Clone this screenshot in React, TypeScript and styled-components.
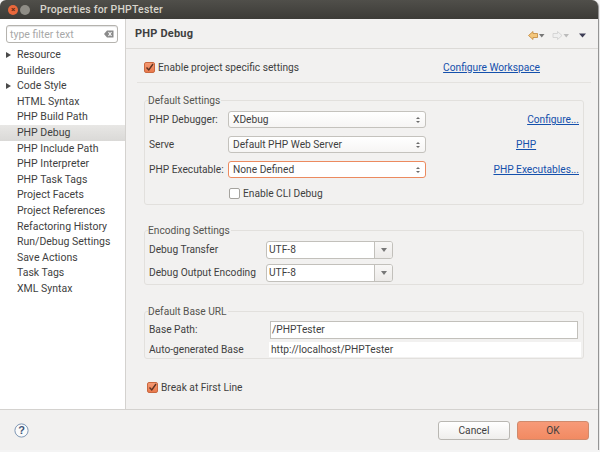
import React from 'react'
import styled, { createGlobalStyle } from 'styled-components'

const GlobalStyle = createGlobalStyle`
    html, body { margin: 0; padding: 0; background: #f4f4f4; }
    body { font-family: Roboto, "Open Sans", sans-serif; font-size: 10.2px; color: #3f3f3f; }
`

const Window = styled.div`
    width: 598px;
    height: 450px;
    display: flex;
    flex-direction: column;
    background: #f2f1f0;
    border-radius: 6px 6px 0 0;
    overflow: hidden;
    box-shadow: 1px 1px 1px #8a8a8a;
`

const TitleBar = styled.div`
    height: 19px;
    flex: none;
    display: flex;
    align-items: center;
    padding-left: 8px;
    background: linear-gradient(#504f4a, #3c3b37);
`

const WindowButton = styled.span<{ $close?: boolean }>`
    width: 10px;
    height: 10px;
    margin-right: 2px;
    border-radius: 50%;
    display: flex;
    align-items: center;
    justify-content: center;
    font-size: 8px;
    line-height: 1;
    font-weight: 700;
    color: ${ p => p.$close ? '#5d2a14' : '#3c3b37' };
    background: ${ p => p.$close ? '#e9683c' : '#8f8d86' };
`

const Title = styled.span`
    margin-left: 8px;
    font-size: 10.5px;
    font-weight: 500;
    letter-spacing: 0.2px;
    color: #d8d5cc;
`

const Body = styled.div`
    flex: 1;
    display: flex;
    min-height: 0;
`

const Sidebar = styled.div`
    width: 125px;
    flex: none;
    background: #fff;
    border-right: 1px solid #d4d2cf;
    padding-top: 6px;
    box-sizing: content-box;
    font-size: 10.5px;
`

const Filter = styled.div`
    margin: 0 7px 0 6px;
    height: 16px;
    display: flex;
    align-items: center;
    justify-content: space-between;
    padding: 0 3px;
    border: 1px solid #b5b3ae;
    border-radius: 3px;
    color: #a8a8a8;
    box-shadow: inset 0 1px 1px #e4e4e4;
`

const Tree = styled.div`
    margin-top: 4px;
`

const TreeRow = styled.div<{ $selected?: boolean }>`
    height: 15.6px;
    line-height: 15.6px;
    display: flex;
    align-items: center;
    padding-left: 6px;
    white-space: nowrap;
    background: ${ p => p.$selected ? 'linear-gradient(#e8e7e5, #dad9d7)' : 'transparent' };
`

const Arrow = styled.span<{ $show?: boolean }>`
    width: 11px;
    flex: none;
    &::before {
        content: '';
        display: ${ p => p.$show ? 'block' : 'none' };
        width: 0;
        height: 0;
        border-left: 5px solid #4a4a4a;
        border-top: 3.5px solid transparent;
        border-bottom: 3.5px solid transparent;
    }
`

const Main = styled.div`
    flex: 1;
    min-width: 0;
    display: flex;
    flex-direction: column;
`

const PageHeader = styled.div`
    height: 29px;
    flex: none;
    display: flex;
    align-items: center;
    justify-content: space-between;
    padding: 0 12px 0 9px;
    border-bottom: 1px solid #dcdad7;
`

const PageTitle = styled.span`
    font-size: 11px;
    font-weight: 700;
    letter-spacing: 0.2px;
`

const NavIcons = styled.div`
    display: flex;
    align-items: center;
    gap: 7px;
    padding-top: 3px;
`

const MenuSlot = styled.span`
    display: flex;
    margin-left: 3px;
`

const Content = styled.div`
    flex: 1;
    padding: 0 7px 0 11px;
`

const TopRow = styled.div`
    height: 34px;
    box-sizing: border-box;
    display: flex;
    align-items: center;
    justify-content: space-between;
    padding: 3px 51px 0 7px;
    border-bottom: 1px solid #e4e2df;
`

const CheckRow = styled.label<{ $indent?: number }>`
    display: flex;
    align-items: center;
    gap: 3px;
    margin-left: ${ p => p.$indent || 0 }px;
`

const Box = styled.span<{ $checked?: boolean }>`
    width: 11px;
    height: 11px;
    flex: none;
    box-sizing: border-box;
    border-radius: 2px;
    display: flex;
    border: 1px solid ${ p => p.$checked ? '#c9683f' : '#a5a39e' };
    background: ${ p => p.$checked ? 'linear-gradient(#f59a73, #e9794d)' : '#fff' };
`

const Link = styled.a`
    color: #1450ac;
    text-decoration: underline;
    white-space: nowrap;
`

const Group = styled.fieldset<{ $top: number; $height: number }>`
    margin: ${ p => p.$top }px 7px 0 7px;
    height: ${ p => p.$height }px;
    padding: 0 4px 0 4px;
    box-sizing: border-box;
    border: 1px solid #e2e0dd;
    border-radius: 3px;
    min-width: 0;
`

const Legend = styled.legend<{ $gap: number }>`
    padding: 0 1px 0 0;
    margin-left: -1px;
    line-height: 13px;
    margin-bottom: ${ p => p.$gap }px;
    color: #55544f;
`

const FieldRow = styled.div<{ $height: number }>`
    display: flex;
    align-items: center;
    height: ${ p => p.$height }px;
`

const FieldLabel = styled.span<{ $width: number }>`
    width: ${ p => p.$width }px;
    flex: none;
    white-space: nowrap;
`

const Select = styled.div<{ $focused?: boolean }>`
    width: 198px;
    height: 17px;
    flex: none;
    box-sizing: border-box;
    display: flex;
    align-items: center;
    justify-content: space-between;
    padding: 0 5px 0 4px;
    border: 1px solid ${ p => p.$focused ? '#ec8a5f' : '#c4c2bd' };
    border-radius: 3px;
    background: ${ p => p.$focused ? '#fff' : 'linear-gradient(#ffffff, #f6f5f4)' };
`

const Spinner = styled.span`
    display: flex;
    flex-direction: column;
    gap: 2px;
    &::before, &::after {
        content: '';
        width: 0;
        height: 0;
        border-left: 2px solid transparent;
        border-right: 2px solid transparent;
    }
    &::before { border-bottom: 2.5px solid #6a6a6a; }
    &::after { border-top: 2.5px solid #6a6a6a; }
`

const RightLink = styled.div`
    flex: 1;
    text-align: right;
`

const CenterLink = styled.div`
    flex: 1;
    padding-left: 90px;
`

const Combo = styled.div`
    width: 127px;
    height: 18px;
    flex: none;
    box-sizing: border-box;
    display: flex;
    border: 1px solid #c2c0bb;
    border-radius: 3px;
    background: #fff;
    overflow: hidden;
`

const ComboText = styled.span`
    flex: 1;
    line-height: 16px;
    padding-left: 2px;
`

const ComboButton = styled.span`
    width: 17px;
    flex: none;
    display: flex;
    align-items: center;
    justify-content: center;
    border-left: 1px solid #c2c0bb;
    background: linear-gradient(#f8f7f6, #eceae8);
    &::after {
        content: '';
        border-left: 3px solid transparent;
        border-right: 3px solid transparent;
        border-top: 4px solid #777;
    }
`

const TextInput = styled.div`
    width: 308px;
    height: 18px;
    flex: none;
    box-sizing: border-box;
    border: 1px solid #c2c0bb;
    background: #fff;
    line-height: 16px;
    padding-left: 1px;
`

const ReadOnly = styled.div`
    width: 310px;
    height: 15px;
    flex: none;
    margin-left: -1px;
    background: #fff;
    line-height: 15px;
    padding-left: 2px;
`

const BreakRow = styled.div`
    margin: 23px 0 0 10px;
`

const Footer = styled.div`
    height: 40px;
    flex: none;
    display: flex;
    align-items: center;
    justify-content: space-between;
    padding: 0 9px 0 14px;
    border-top: 1px solid #d4d2cf;
`

const Buttons = styled.div`
    display: flex;
    gap: 7px;
`

const Button = styled.button<{ $primary?: boolean }>`
    width: 72px;
    height: 19px;
    padding: 0;
    font: inherit;
    color: #3f3f3f;
    border-radius: 3px;
    border: 1px solid ${ p => p.$primary ? '#d08a6c' : '#b9b7b2' };
    background: ${ p => p.$primary ? 'linear-gradient(#f79a78, #f28a62)' : 'linear-gradient(#ffffff, #efeeec)' };
`

const Check = () => (
    <svg width="9" height="9" viewBox="0 0 9 9">
        <path d="M1.5 4.5 L3.8 7 L8 1" fill="none" stroke="#5b3323" strokeWidth="1.4" />
    </svg>
)

const ClearIcon = () => (
    <svg width="10" height="8" viewBox="0 0 10 8">
        <path d="M0 4 L3 0.5 H9.5 V7.5 H3 Z" fill="#8a8a8a" />
        <path d="M4.5 2 L7.5 6 M7.5 2 L4.5 6" stroke="#fff" strokeWidth="1.1" />
    </svg>
)

const BackIcon = () => (
    <svg width="17" height="9" viewBox="0 0 17 9">
        <path d="M0.5 4.5 L5 0.5 V2.5 H9.5 V6.5 H5 V8.5 Z" fill="#f4c77c" stroke="#c0863a" strokeWidth="0.8" />
        <path d="M11 3 H16.5 L13.75 6.5 Z" fill="#777" />
    </svg>
)

const ForwardIcon = () => (
    <svg width="17" height="9" viewBox="0 0 17 9">
        <path d="M10 4.5 L5.5 0.5 V2.5 H1 V6.5 H5.5 V8.5 Z" fill="#efefef" stroke="#cfcfcf" strokeWidth="0.8" />
        <path d="M11.5 3 H17 L14.25 6.5 Z" fill="#bbb" />
    </svg>
)

const MenuIcon = () => (
    <svg width="7" height="5" viewBox="0 0 7 5">
        <path d="M0 0.5 H7 L3.5 4.5 Z" fill="#3d3d55" />
    </svg>
)

const HelpIcon = () => (
    <svg width="15" height="15" viewBox="0 0 15 15">
        <circle cx="7.5" cy="7.5" r="6.6" fill="#fbfbfb" stroke="#7f97b5" strokeWidth="1" />
        <text x="7.5" y="11.3" textAnchor="middle" fontFamily="Liberation Sans" fontWeight="700" fontSize="11" fill="#3f5578">?</text>
    </svg>
)

const treeItems = [
    'Resource', 'Builders', 'Code Style', 'HTML Syntax', 'PHP Build Path', 'PHP Debug',
    'PHP Include Path', 'PHP Interpreter', 'PHP Task Tags', 'Project Facets', 'Project References',
    'Refactoring History', 'Run/Debug Settings', 'Save Actions', 'Task Tags', 'XML Syntax',
]

const App: React.FC = () => (
    <Window>
        <GlobalStyle />
        <TitleBar>
            <WindowButton $close>×</WindowButton>
            <WindowButton />
            <Title>Properties for PHPTester</Title>
        </TitleBar>
        <Body>
            <Sidebar>
                <Filter>type filter text<ClearIcon /></Filter>
                <Tree>
                    { treeItems.map(item => (
                        <TreeRow key={ item } $selected={ item === 'PHP Debug' }>
                            <Arrow $show={ item === 'Resource' || item === 'Code Style' } />
                            { item }
                        </TreeRow>
                    )) }
                </Tree>
            </Sidebar>
            <Main>
                <PageHeader>
                    <PageTitle>PHP Debug</PageTitle>
                    <NavIcons>
                        <BackIcon />
                        <ForwardIcon />
                        <MenuSlot><MenuIcon /></MenuSlot>
                    </NavIcons>
                </PageHeader>
                <Content>
                    <TopRow>
                        <CheckRow><Box $checked><Check /></Box>Enable project specific settings</CheckRow>
                        <Link>Configure Workspace</Link>
                    </TopRow>
                    <Group $top={ 11 } $height={ 111 }>
                        <Legend $gap={ 0 }>Default Settings</Legend>
                        <FieldRow $height={ 25 }>
                            <FieldLabel $width={ 79 }>PHP Debugger:</FieldLabel>
                            <Select>XDebug<Spinner /></Select>
                            <RightLink><Link>Configure...</Link></RightLink>
                        </FieldRow>
                        <FieldRow $height={ 25 }>
                            <FieldLabel $width={ 79 }>Serve</FieldLabel>
                            <Select>Default PHP Web Server<Spinner /></Select>
                            <CenterLink><Link>PHP</Link></CenterLink>
                        </FieldRow>
                        <FieldRow $height={ 25 }>
                            <FieldLabel $width={ 79 }>PHP Executable:</FieldLabel>
                            <Select $focused>None Defined<Spinner /></Select>
                            <RightLink><Link>PHP Executables...</Link></RightLink>
                        </FieldRow>
                        <FieldRow $height={ 23 }>
                            <CheckRow $indent={ 80 }><Box />Enable CLI Debug</CheckRow>
                        </FieldRow>
                    </Group>
                    <Group $top={ 19 } $height={ 61 }>
                        <Legend $gap={ 1 }>Encoding Settings</Legend>
                        <FieldRow $height={ 23 }>
                            <FieldLabel $width={ 117 }>Debug Transfer</FieldLabel>
                            <Combo><ComboText>UTF-8</ComboText><ComboButton /></Combo>
                        </FieldRow>
                        <FieldRow $height={ 23 }>
                            <FieldLabel $width={ 117 }>Debug Output Encoding</FieldLabel>
                            <Combo><ComboText>UTF-8</ComboText><ComboButton /></Combo>
                        </FieldRow>
                    </Group>
                    <Group $top={ 20 } $height={ 54 }>
                        <Legend $gap={ 1 }>Default Base URL</Legend>
                        <FieldRow $height={ 21 }>
                            <FieldLabel $width={ 121 }>Base Path:</FieldLabel>
                            <TextInput>/PHPTester</TextInput>
                        </FieldRow>
                        <FieldRow $height={ 19 }>
                            <FieldLabel $width={ 121 }>Auto-generated Base</FieldLabel>
                            <ReadOnly>http://localhost/PHPTester</ReadOnly>
                        </FieldRow>
                    </Group>
                    <BreakRow>
                        <CheckRow><Box $checked><Check /></Box>Break at First Line</CheckRow>
                    </BreakRow>
                </Content>
            </Main>
        </Body>
        <Footer>
            <HelpIcon />
            <Buttons>
                <Button>Cancel</Button>
                <Button $primary>OK</Button>
            </Buttons>
        </Footer>
    </Window>
)

export default App
